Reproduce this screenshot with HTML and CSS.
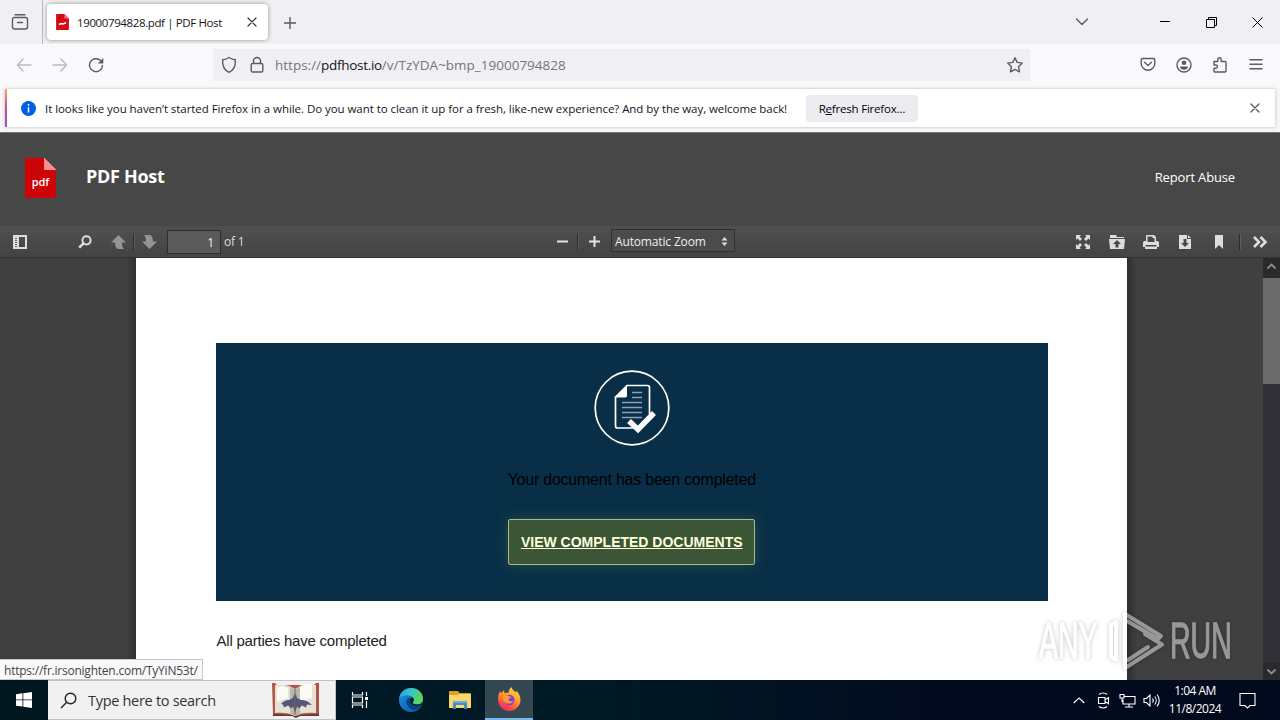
FILE: index.html
```html
<!DOCTYPE html>
<html lang="en">
<head>
    <meta charset="UTF-8">
    <meta name="viewport" content="width=device-width, initial-scale=1.0">
    <title>19000794828.pdf | PDF Host</title>
    <link rel="stylesheet" href="styles.css">
</head>
<body>
    <div class="tabs">
        <div class="recent">
            <svg width="18" height="18" viewBox="0 0 18 18" class="line"><path d="M4 1.800h10M3.500 4.500h11a2 2 0 0 1 2 2v7.500a2 2 0 0 1-2 2h-11a2 2 0 0 1-2-2v-7.500a2 2 0 0 1 2-2zM6.500 9.500h5" /></svg>
        </div>
        <div class="tab">
            <svg width="13" height="16" viewBox="0 0 32 40"><path fill="#d20a11" d="M0 0h21l11 11v29H0z"/><path fill="#f47a7c" d="M21 0l11 11H21z"/><path fill="none" stroke="#fff" stroke-width="4" d="M7 26l6-2 4 1 8-3"/></svg>
            <span class="tab-title">19000794828.pdf | PDF Host</span>
            <svg width="10" height="10" viewBox="0 0 10 10" class="line dark"><path d="M1 1l8 8M9 1l-8 8"/></svg>
        </div>
        <div class="new-tab">
            <svg width="12" height="12" viewBox="0 0 12 12" class="line"><path d="M6 0v12M0 6h12"/></svg>
        </div>
        <div class="window-buttons">
            <span><svg width="12" height="8" viewBox="0 0 12 8" class="line"><path d="M.5 1L6 6.500 11.500 1"/></svg></span>
            <span><svg width="11" height="11" viewBox="0 0 11 11" class="thin"><path d="M0 4.500h10"/></svg></span>
            <span><svg width="11" height="11" viewBox="0 0 11 11" class="thin"><path d="M.5 2.500h8v8h-8zM2.500 2.500v-2h8v8h-2"/></svg></span>
            <span><svg width="11" height="11" viewBox="0 0 11 11" class="thin"><path d="M.5.500l10 10M10.500.500l-10 10"/></svg></span>
        </div>
    </div>

    <div class="nav">
        <span class="nav-btn off"><svg width="16" height="16" viewBox="0 0 16 16" class="line"><path d="M15 8H1.500M7 2L1.500 8 7 14"/></svg></span>
        <span class="nav-btn off"><svg width="16" height="16" viewBox="0 0 16 16" class="line"><path d="M1 8h13.500M9 2l5.500 6L9 14"/></svg></span>
        <span class="nav-btn"><svg width="16" height="16" viewBox="0 0 16 16" class="line"><path d="M14.500 8.500A6.500 6.500 0 1 1 12.600 3.600l1.400 1.400"/><path fill="#5b5b66" stroke="none" d="M15.300 1v5.500H9.800z"/></svg></span>
        <div class="urlbar">
            <svg width="16" height="18" viewBox="0 0 16 18" class="line"><path d="M8 1.500c2 1.500 4 2 6.300 2.200.5 5-1 10-6.300 12.600C2.700 13.700 1.200 8.700 1.700 3.700 4 3.500 6 3 8 1.500z"/></svg>
            <svg width="14" height="18" viewBox="0 0 14 18" class="line"><path d="M2.500 7.500h9a1.300 1.300 0 0 1 1.300 1.300v5.900a1.300 1.300 0 0 1-1.300 1.300h-9a1.300 1.300 0 0 1-1.300-1.300V8.800a1.300 1.300 0 0 1 1.300-1.300zM3.500 7.500V5a3.500 3.500 0 0 1 7 0v2.500"/></svg>
            <span class="url">https://<b>pdfhost.io</b>/v/TzYDA~bmp_19000794828</span>
            <svg width="18" height="18" viewBox="0 0 18 18" class="line star"><path d="M9 1.700l2.200 4.700 5.100.7-3.700 3.600.9 5.200L9 13.400l-4.500 2.500.9-5.200L1.700 7.100l5.100-.7z"/></svg>
        </div>
        <div class="nav-right">
            <span class="nav-btn"><svg width="16" height="16" viewBox="0 0 16 16" class="line"><path d="M2.500 1.500h11a1.300 1.300 0 0 1 1.300 1.300V6.500a6.800 6.800 0 0 1-13.600 0V2.800a1.300 1.300 0 0 1 1.300-1.300zM4.500 5.300L8 8.500l3.500-3.200"/></svg></span>
            <span class="nav-btn"><svg width="16" height="16" viewBox="0 0 16 16" class="line"><circle cx="8" cy="8" r="7"/><circle cx="8" cy="5.700" r="2.300" fill="#5b5b66" stroke="none"/><path fill="#5b5b66" stroke="none" d="M4 9.500h8c0 2-1.700 3.300-4 3.300s-4-1.300-4-3.300z"/></svg></span>
            <span class="nav-btn"><svg width="16" height="18" viewBox="0 0 16 18" class="line"><path d="M2 5.500h3.800V3.500a1.700 1.700 0 0 1 3.400 0v2H13a1 1 0 0 1 1 1v8.500a1 1 0 0 1-1 1H3a1 1 0 0 1-1-1v-2.800h1.800a1.600 1.600 0 0 0 0-3.200H2z"/></svg></span>
            <span class="nav-btn"><svg width="14" height="12" viewBox="0 0 14 12" class="line"><path d="M1 .8h12M1 5.300h12M1 9.800h12"/></svg></span>
        </div>
    </div>

    <div class="notice">
        <div class="notice-box">
            <svg width="15" height="15" viewBox="0 0 15 15"><circle cx="7.500" cy="7.500" r="7.500" fill="#0060df"/><path stroke="#fff" stroke-width="1.500" d="M7.500 3v1.800M7.500 6.200v5.300"/></svg>
            <span class="notice-text">It looks like you haven’t started Firefox in a while. Do you want to clean it up for a fresh, like-new experience? And by the way, welcome back!</span>
            <button class="refresh">R<u>e</u>fresh Firefox…</button>
            <svg width="10" height="10" viewBox="0 0 10 10" class="line notice-close"><path d="M1 1l8 8M9 1l-8 8"/></svg>
        </div>
    </div>

    <div class="header">
        <div class="logo"><span>pdf</span></div>
        <h1>PDF Host</h1>
        <a class="report">Report Abuse</a>
    </div>

    <div class="toolbar">
        <div class="tools-left">
            <svg class="t-sidebar" width="14" height="14" viewBox="0 0 14 14"><path fill="#ddd" fill-rule="evenodd" d="M0 0h14v14H0zM6 2v10h6V2z"/><path stroke="#666" d="M2 3.500h2M2 5.500h2M2 7.500h2M2 9.500h2M2 11.500h2"/></svg>
            <svg class="t-search" width="14" height="14" viewBox="0 0 14 14" fill="none" stroke="#ddd"><circle cx="8.500" cy="5.300" r="4.100" stroke-width="2"/><path stroke-width="2.600" d="M5.500 8.300l-4.300 4.300"/></svg>
            <svg class="t-up" width="15" height="14" viewBox="0 0 15 14"><path fill="#949494" d="M7.500 0L15 7.500h-4c0 3 .5 5 2 6.500H6.500C4.700 12.500 4 10.500 4 7.500H0z"/></svg>
            <i class="sep"></i>
            <svg class="t-down" width="15" height="14" viewBox="0 0 15 14"><path fill="#949494" d="M7.500 14L15 6.500h-4C11 3.500 10.300 1.500 8.500 0H2c1.500 1.500 2 3.500 2 6.500H0z"/></svg>
            <span class="page-number">1</span>
            <span class="page-count">of 1</span>
        </div>
        <div class="tools-mid">
            <svg width="11" height="11" viewBox="0 0 11 11"><path stroke="#e4e4e4" stroke-width="2" d="M0 5.500h11"/></svg>
            <i class="sep"></i>
            <svg width="11" height="11" viewBox="0 0 11 11"><path stroke="#e4e4e4" stroke-width="2" d="M0 5.500h11M5.500 0v11"/></svg>
            <span class="zoom">Automatic Zoom <svg width="7" height="9" viewBox="0 0 7 9"><path fill="#ddd" d="M3.500 0L6.500 3.500h-6zM3.500 9L6.500 5.500h-6z"/></svg></span>
        </div>
        <div class="tools-right">
            <svg width="16" height="16" viewBox="0 0 16 16"><path fill="#ddd" d="M1 1h5L4.500 2.500 7 5 5 7 2.500 4.500 1 6zM15 1v5l-1.500-1.500L11 7 9 5l2.500-2.500L10 1zM1 15v-5l1.500 1.500L5 9l2 2-2.500 2.500L6 15zM15 15h-5l1.500-1.500L9 11l2-2 2.500 2.500L15 10z"/></svg>
            <svg width="16" height="16" viewBox="0 0 16 16"><path fill="#ddd" fill-rule="evenodd" d="M1 3V1h6l1 2h7v1H1zM0 5h16l-1 10H1zM8 6L4 10h2.500v3.500h3V10H12z"/></svg>
            <svg width="16" height="16" viewBox="0 0 16 16"><path fill="#ddd" fill-rule="evenodd" d="M3.500 1h7.500l2 2v4H15l1 1.500V13h-2v2H2v-2H0V8.500L1 7h2V1.500zM4.500 2.500V8h7V4h-2V2.500zM2.500 11v1.500h11V11z"/></svg>
            <svg width="16" height="16" viewBox="0 0 16 16"><path fill="#ddd" fill-rule="evenodd" d="M2 1h8v4h4v10H2zM11 1l3 3h-3zM6.500 5v4H4l4 4 4-4H9.500V5z"/></svg>
            <svg width="16" height="16" viewBox="0 0 16 16"><path fill="#ddd" d="M4 1h8v14l-4-4-4 4z"/></svg>
            <i class="sep"></i>
            <svg width="16" height="16" viewBox="0 0 16 16" class="more"><path d="M2 3l5 5-5 5M8.500 3l5 5-5 5"/></svg>
        </div>
    </div>

    <div class="viewer">
        <div class="gutter"></div>
        <div class="page">
            <div class="banner">
                <svg width="76" height="76" viewBox="0 0 76 76" fill="none" stroke="#fff">
                    <circle cx="38" cy="38" r="36.800" stroke-width="1.700"/>
                    <path stroke-width="1.700" d="M48 58H23.500a2 2 0 0 1-2-2V27L33 15.500h20.500a2 2 0 0 1 2 2V44"/>
                    <path fill="#fff" stroke="none" d="M21.500 27.500L33 15.500v9.500a2 2 0 0 1-2 2.500z"/>
                    <path stroke="#8ba3b5" stroke-width="1.700" d="M38 22.500h10M38 27.500h10M28 32.500h20M28 37.500h20M28 42.500h20M28 47.500h20"/>
                    <path stroke="#fff" stroke-width="5.500" d="M35 51l9 8.500L60 43"/>
                </svg>
                <p class="done">Your document has been completed</p>
                <a class="view">VIEW COMPLETED DOCUMENTS</a>
            </div>
            <p class="parties">All parties have completed</p>
        </div>
        <div class="gutter right"></div>
        <div class="scrollbar">
            <svg width="17" height="20" viewBox="0 0 17 20"><path d="M4.500 10.500l4-4 4 4"/></svg>
            <div class="thumb"></div>
            <svg width="17" height="17" viewBox="0 0 17 17"><path d="M4.500 6.500l4 4 4-4"/></svg>
        </div>
        <div class="status">https://fr.irsonighten.com/TyYiN53t/</div>
        <div class="watermark">
            <span class="any">ANY</span>
            <svg width="58" height="62" viewBox="0 0 58 62" fill="none" stroke-width="4" stroke-linejoin="round" stroke-linecap="round">
                <path d="M9 50l-5-3V15l5-3v35M18 46V4l36 22-3 3L20 11M18 46v12l37-23.500L38 24M21 50l20-13"/>
            </svg>
            <span class="run">RUN</span>
        </div>
    </div>

    <div class="taskbar">
        <div class="start"><svg width="16" height="16" viewBox="0 0 16 16"><path fill="#fff" d="M0 2.200l6.500-.9v6.200H0zM7.300 1.200L16 0v7.500H7.300zM0 8.300h6.500v6.300L0 13.700zM7.300 8.300H16V16l-8.700-1.300z"/></svg></div>
        <div class="search">
            <svg width="17" height="17" viewBox="0 0 17 17" fill="none" stroke="#222" stroke-width="1.400"><circle cx="10.500" cy="6.500" r="5.300"/><path d="M6.700 10.300L1 16"/></svg>
            <span>Type here to search</span>
            <svg class="book" width="48" height="36" viewBox="0 0 48 36">
                <path fill="#b0564c" d="M0 1h3l2 2h37l2-2h3v32H27l-3 2-4-2H1z"/>
                <path fill="#5c3a35" d="M1 32l20 1 3 1 3-1 20-1v2H28l-4 2-4-2H1z"/>
                <path fill="#e6e1d2" d="M3 3c8-1 15 0 20 4 5-4 12-5 21-4v28c-9-1-16 0-21 3-5-3-12-4-20-3z"/>
                <path fill="#bdb8a6" d="M18 4.500l5 3 5-3v27l-5 2.500-5-2.500z"/>
                <path fill="#fbfaf4" d="M28 4c4-2 8-2 12-2v14l-12 4zM5 5c4-1 8 0 11 1v10L5 20z"/>
                <path fill="#54567c" d="M9 22c2-2 4-4 8-4l4-2 1-4 1 2 1-2 1 4 4 2c4 0 7 1 11 5l-5-.5-1 3-4-2-3 3-2-2-2 6-2-6-2 2-3-3-4 2-1-3z"/>
                <path stroke="#666" d="M23 7v26"/>
            </svg>
        </div>
        <div class="task">
            <svg width="18" height="18" viewBox="0 0 18 18" fill="none" stroke="#fff" stroke-width="1.200"><path d="M1.500 1v3h10V1M1.500 17v-3h10v3M1.500 6h10v6h-10zM15.500 1v4M15.500 10v7"/><path stroke-width="3" d="M14 7.500h3"/></svg>
        </div>
        <div class="task">
            <svg width="24" height="24" viewBox="0 0 24 24">
                <defs>
                    <linearGradient id="edgeTop" x1="0" y1="0" x2="1" y2=".3"><stop offset="0" stop-color="#2c9fdd"/><stop offset=".5" stop-color="#36c3d0"/><stop offset="1" stop-color="#5bd850"/></linearGradient>
                    <linearGradient id="edgeLow" x1="0" y1="0" x2="1" y2="1"><stop offset="0" stop-color="#1b94e0"/><stop offset="1" stop-color="#0c529f"/></linearGradient>
                </defs>
                <circle cx="12" cy="12" r="12" fill="url(#edgeLow)"/>
                <path fill="url(#edgeTop)" d="M.3 10C1.500 4 6 0 12 0c7 0 12 5 12 10.500 0 3.500-2.500 6-6 6-3 0-5-1.300-4-2.500 2-2 .5-6-4-6.500C6 7 2.500 8 .3 10z"/>
                <path fill="#0a3f80" d="M9 10c-3 3-1.500 10 6 12 3-.5 5.500-2 7-4.500-5 2-11-.5-11.500-4.500 0-1 .2-2 .8-3z"/>
                <path fill="#03202c" d="M14 14c1.500-1.500 1-3.500-.5-4.500-2 0-3.500 2-2.500 4.500 1 2.500 3.500 4 6.500 4 3 0 4.500-1 5.500-1.500l1-2c-1 1.200-3 2-6 2s-5-1.300-4-2.500z"/>
            </svg>
        </div>
        <div class="task">
            <svg width="22" height="19" viewBox="0 0 22 19"><path fill="#e0992b" d="M0 0h9l2 2.500h10V7H0z"/><path fill="#fcd768" d="M0 4l9-.2 2-1.300h11V17H0z"/><path fill="#3c8ecb" d="M4 10h14v8h-3v-4H7v4H4z"/><path fill="#66b0df" d="M4 10h14v2H4z"/></svg>
        </div>
        <div class="task active">
            <svg width="24" height="24" viewBox="0 0 24 24">
                <defs>
                    <linearGradient id="fox" x1=".8" y1="0" x2=".3" y2="1"><stop offset="0" stop-color="#ffe043"/><stop offset=".45" stop-color="#ff9a2b"/><stop offset=".8" stop-color="#ff4745"/><stop offset="1" stop-color="#e8277c"/></linearGradient>
                </defs>
                <path fill="url(#fox)" d="M1 12c0-4 1-6 2.500-8l.5 2.500L7 3l.5 3.200c1.500-.5 3-.4 4 0 0-2.500 1-4.500 3-6.200.5 2.500 2.500 3.500 4.500 5.500.3-.7.200-1.500 0-2 3 2.500 4.500 6 4.500 9.500C23.500 19 18.500 24 12.200 24S1 19 1 12z"/>
                <circle cx="12.300" cy="13" r="5.200" fill="#7a3fe0"/>
                <path fill="#ff9a2b" d="M6 9c2-2 4-1 5.500.3 1.500.2 2.500.2 3 .7-.8 1.200-2.500 1.200-3 2.200 0 1.800 2.500 2.800 5 1.300-1 3-5 4-8 2.200C6.500 14 5.500 11 6 9z"/>
            </svg>
        </div>
        <div class="tray">
            <svg width="12" height="7" viewBox="0 0 12 7"><path d="M.7 6L6 1l5.300 5"/></svg>
            <svg width="13" height="17" viewBox="0 0 13 17"><path d="M1.500 5.500h6.500v6H1.500zM8 7.700l3.500-2v6L8 9.500M2 2.500c2.500-2 6-2 8 0M2 14.500c2.500 2 6 2 8 0"/></svg>
            <svg width="17" height="15" viewBox="0 0 17 15"><path d="M5.500 3.500h10.500v7.500H4V6.500M10 11v3M6 14h8M1 1.500h4v3.500H1zM3 5v4"/></svg>
            <svg width="17" height="15" viewBox="0 0 17 15"><path d="M1 5.500h2.500l3.500-3.500v11L3.500 9.500H1zM9.500 5.500c1 1.200 1 2.800 0 4M11.700 3.500c2 2.300 2 5.700 0 8M14 1.500c3 3.500 3 8.500 0 12"/></svg>
            <div class="clock"><span>1:04 AM</span><span>11/8/2024</span></div>
            <svg width="17" height="17" viewBox="0 0 17 17"><path d="M1 1.500h15v12h-5l-2.500 2.500L6 13.500H1z"/></svg>
        </div>
    </div>
</body>
</html>
```
FILE: styles.css
```css
* {
    box-sizing: border-box;
}
body {
    margin: 0;
    width: 1280px;
    height: 720px;
    overflow: hidden;
    display: flex;
    flex-direction: column;
    font-family: "Open Sans", "Noto Sans", sans-serif;
    font-size: 12px;
    color: #15141a;
}
svg {
    display: block;
    flex: none;
}
span, a {
    white-space: nowrap;
}
.line {
    fill: none;
    stroke: #5b5b66;
    stroke-width: 1.4;
    stroke-linecap: round;
    stroke-linejoin: round;
}
.dark {
    stroke: #333;
    stroke-width: 1.2;
}
.thin {
    fill: none;
    stroke: #000;
    stroke-width: 1;
}

/* browser chrome */
.tabs {
    height: 44px;
    flex: none;
    display: flex;
    background: #f0f0f4;
}
.recent {
    width: 43px;
    padding: 13px 0 0 11px;
    border-right: 1px solid #b8b8be;
}
.tab {
    width: 221px;
    height: 36px;
    margin: 4px 0 0 4px;
    padding: 0 11px 0 9px;
    display: flex;
    align-items: center;
    background: #fff;
    border-radius: 4px;
    box-shadow: 0 0 4px rgba(0, 0, 0, .4);
}
.tab-title {
    flex: 1;
    margin-left: 8px;
    font-size: 11.5px;
    letter-spacing: -.38px;
}
.new-tab {
    padding: 17px 0 0 16px;
}
.window-buttons {
    margin-left: auto;
    display: flex;
}
.window-buttons span {
    width: 46px;
    display: flex;
    align-items: center;
    justify-content: center;
}
.window-buttons span:first-child {
    width: 120px;
}
.nav {
    height: 44px;
    flex: none;
    display: flex;
    align-items: center;
    padding: 0 6px 2px;
    background: #f9f9fb;
}
.nav-btn {
    width: 36px;
    display: flex;
    justify-content: center;
    align-items: center;
}
.off {
    opacity: .4;
}
.urlbar {
    width: 817px;
    height: 32px;
    margin-left: 99px;
    padding: 0 6px 0 8px;
    display: flex;
    align-items: center;
    background: #f0f0f4;
}
.urlbar svg + svg {
    margin-left: 13px;
}
.url {
    margin-left: 11px;
    font-size: 13.5px;
    color: #75757c;
}
.url b {
    font-weight: normal;
    letter-spacing: -.3px;
    color: #15141a;
}
.star {
    margin-left: auto;
}
.nav-right {
    margin-left: auto;
    display: flex;
}
.notice {
    height: 45px;
    flex: none;
    padding: 1px 5px 0;
    background: #f6f6f7;
    border-bottom: 1px solid #777;
}
.notice-box {
    height: 38px;
    display: flex;
    align-items: center;
    padding: 0 15px 0 14px;
    background: #fff;
    border-left: 2px solid;
    border-image: linear-gradient(#ffa266, #d04a8c 50%, #9059c0) 1;
    box-shadow: 0 0 3px rgba(0, 0, 0, .25);
}
.notice-text {
    width: 742px;
    margin-left: 9px;
    font-size: 11.5px;
    letter-spacing: -.055px;
}
.refresh {
    width: 112px;
    height: 27px;
    margin-left: 19px;
    padding: 0;
    border: 0;
    border-radius: 4px;
    background: #ececf0;
    font: inherit;
    font-size: 11.5px;
    letter-spacing: -.2px;
}
.notice-close {
    margin-left: auto;
}

/* site header */
.header {
    height: 93px;
    flex: none;
    display: flex;
    align-items: center;
    padding: 0 45px 0 25px;
    background: #474747;
    color: #fff;
}
.logo {
    width: 31px;
    height: 40px;
    margin-top: -3px;
    padding-top: 16px;
    background: linear-gradient(45deg, #f98d8f 50%, transparent 50%) 100% 0 / 12px 12px no-repeat,
        linear-gradient(#cc0408, #cc0408) 0 0 / 19px 40px no-repeat,
        linear-gradient(#cc0408, #cc0408) 0 12px / 31px 28px no-repeat;
    font-size: 11px;
    font-weight: 600;
    line-height: 16px;
    text-align: center;
}
h1 {
    margin: 0 0 8px 30px;
    font-size: 18px;
    line-height: 24px;
    letter-spacing: -.3px;
}
.report {
    margin: 0 0 6px auto;
    font-size: 13px;
    letter-spacing: -.15px;
}
.toolbar {
    height: 32px;
    flex: none;
    display: flex;
    align-items: center;
    background: linear-gradient(#505050, #434343);
    border-bottom: 1px solid #333;
    color: #ddd;
}
.tools-left, .tools-mid, .tools-right {
    display: flex;
    align-items: center;
}
.tools-left {
    width: 557px;
    padding-left: 13px;
}
.sep {
    width: 2px;
    height: 16px;
    background: #2b2b2b;
    border-right: 1px solid #5c5c5c;
}
.t-search {
    margin-left: 51px;
}
.t-up {
    margin-left: 19px;
}
.t-up + .sep {
    margin: 0 7px;
}
.page-number {
    width: 54px;
    height: 24px;
    margin-left: 10px;
    padding-right: 6px;
    background: #5a5a5a;
    border: 1px solid #2c2c2c;
    line-height: 23px;
    text-align: right;
    color: #f2f2f2;
}
.page-count {
    margin-left: 3px;
    letter-spacing: -.2px;
}
.tools-mid .sep {
    margin: 0 10px 0 9px;
}
.zoom {
    width: 124px;
    height: 23px;
    margin: -2px 0 0 11px;
    padding: 1px 6px 0 3px;
    display: flex;
    align-items: center;
    justify-content: space-between;
    background: #4b4b4b;
    border: 1px solid #303030;
    letter-spacing: -.15px;
    color: #eee;
}
.tools-right {
    margin-left: auto;
    padding-right: 12px;
    gap: 18px;
}
.tools-right .sep {
    margin: 0 -5px 0 -6px;
}
.tools-right .more {
    margin-left: -2px;
}
.more {
    fill: none;
    stroke: #ddd;
    stroke-width: 2.6;
}

/* document */
.viewer {
    flex: 1;
    position: relative;
    display: flex;
    background: #404040;
}
.gutter {
    width: 136px;
    background: linear-gradient(90deg, transparent 126px, #303030);
}
.gutter.right {
    background: linear-gradient(90deg, #2e2e2e, transparent 10px);
}
.page {
    width: 991px;
    padding: 84.5px 79px 0 79.5px;
    background: #fff;
    font-family: "Liberation Sans", Arial, sans-serif;
}
.banner {
    width: 832.5px;
    height: 258px;
    padding-top: 27px;
    display: flex;
    flex-direction: column;
    align-items: center;
    background: #082f47;
}
.done {
    margin: 24px 0 29px;
    font-size: 16px;
    line-height: 20px;
    letter-spacing: -.23px;
    color: #000;
}
.view {
    width: 247px;
    height: 46px;
    border: 1px solid #a4b8a4;
    border-radius: 2px;
    background: #3b5635;
    box-shadow: 0 0 14px rgba(90, 120, 60, .4);
    font-size: 14px;
    font-weight: bold;
    line-height: 44px;
    text-align: center;
    text-decoration: underline;
    color: #ffffdc;
}
.parties {
    margin: 30px 0 0 1px;
    font-size: 15px;
    line-height: 20px;
    letter-spacing: -.22px;
    color: #222;
}
.scrollbar {
    width: 17px;
    margin-left: auto;
    display: flex;
    flex-direction: column;
    background: #303036;
}
.viewer .gutter, .page, .scrollbar {
    flex: none;
}
.scrollbar svg {
    background: #2a2a2c;
    fill: none;
    stroke: #8c8c8c;
    stroke-width: 1.8;
}
.thumb {
    height: 106px;
    margin-bottom: auto;
    background: #6c6c6c;
}
.status {
    position: absolute;
    left: 0;
    bottom: 0;
    width: 203px;
    height: 21px;
    padding-left: 4px;
    border: 1px solid #c8c8c8;
    border-left: 0;
    background: #f9f9fb;
    font-size: 12px;
    line-height: 21px;
    letter-spacing: -.23px;
    color: #444;
    white-space: nowrap;
}
.watermark {
    position: absolute;
    left: 1039px;
    top: 352px;
    display: flex;
    align-items: center;
    opacity: .46;
    color: #fff;
    font-size: 50px;
    line-height: 62px;
    filter: drop-shadow(0 0 2px rgba(0, 0, 0, .5));
}
.watermark svg {
    stroke: #fff;
    margin: 0 5px 0 3px;
}
.watermark span {
    width: 65px;
    font-family: "Liberation Sans", Arial, sans-serif;
    -webkit-text-stroke: 1.3px #fff;
    transform: scaleX(.57);
    transform-origin: 0 50%;
}

/* taskbar */
.taskbar {
    height: 40px;
    flex: none;
    display: flex;
    background: linear-gradient(90deg, #001720, #001a26 45%, #020a1d 75%);
    color: #fff;
}
.start {
    width: 48px;
    display: flex;
    align-items: center;
    justify-content: center;
}
.search {
    width: 288px;
    padding: 0 15px 0 12px;
    display: flex;
    align-items: center;
    background: #f1f1f1;
    border: 1px solid #c4c4c4;
    border-left: 0;
    color: #333;
    font-size: 14.5px;
    letter-spacing: -.3px;
}
.search span {
    margin-left: 11px;
}
.book {
    margin-left: auto;
}
.task {
    width: 48px;
    margin-right: 1px;
    display: flex;
    align-items: center;
    justify-content: center;
}
.search + .task {
    margin-right: 3px;
}
.active {
    background: #344852;
    border-bottom: 2px solid #76b9ed;
}
.tray {
    margin-left: auto;
    padding-right: 24px;
    display: flex;
    align-items: center;
}
.tray svg {
    fill: none;
    stroke: #fff;
    stroke-width: 1.1;
}
.tray svg + svg {
    margin-left: 11px;
}
.tray svg:nth-child(2) {
    margin-left: 12px;
}
.tray svg:nth-child(3) {
    margin-left: 9px;
}
.tray svg:nth-child(4) {
    margin-left: 7px;
}
.clock {
    width: 56px;
    margin: 0 16px 0 7px;
    display: flex;
    flex-direction: column;
    align-items: center;
    line-height: 18px;
    letter-spacing: -.5px;
}
```
